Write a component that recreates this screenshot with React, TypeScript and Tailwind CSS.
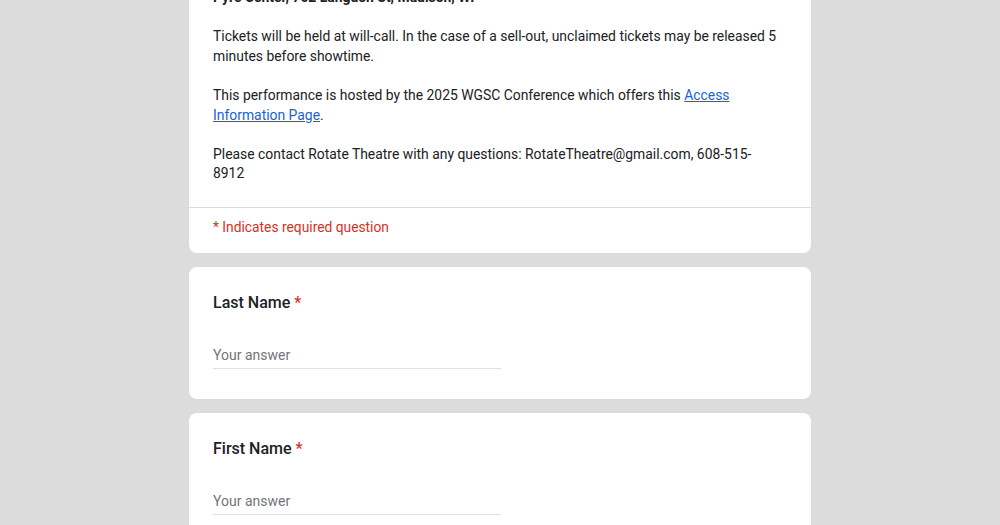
import React from 'react';

const Question = ({ title }: { title: string }) => (
  <div className="rounded-lg bg-white px-6 pt-6 pb-[30px]">
    <div className="text-[16px] leading-6 font-medium text-[#202124]">
      {title} <span className="text-[#d93025]">*</span>
    </div>
    <div className="mt-[30px] w-[288px] border-b border-[#e0e0e0] pb-[3px] text-[14px] leading-5 text-[#70757a]">
      Your answer
    </div>
  </div>
);

export default function App() {
  return (
    <div className="min-h-screen bg-[#dcdcdc] font-['Roboto',sans-serif]">
      <div className="mx-auto -mt-[36px] flex w-[622px] flex-col gap-[14px] pb-10">
        <div className="rounded-lg bg-white">
          <div className="pt-6 pr-[30px] pb-[23px] pl-6 text-[13.9px] leading-[19.6px] text-[#202124]">
            <p className="font-bold">Pyre Center, 702 Langdon St, Madison, WI</p>
            <br />
            <p>
              Tickets will be held at will-call. In the case of a sell-out, unclaimed tickets may be released 5
              minutes before showtime.
            </p>
            <br />
            <p>
              This performance is hosted by the 2025 WGSC Conference which offers this{' '}
              <a href="#" className="text-[#1a62d6] underline">
                Access Information Page
              </a>
              .
            </p>
            <br />
            <p>Please contact Rotate Theatre with any questions: RotateTheatre@gmail.com, 608-515-8912</p>
          </div>
          <div className="border-t border-[#dadce0] px-6 pt-[9px] pb-[16px] text-[13.8px] leading-5 text-[#d93025]">
            * Indicates required question
          </div>
        </div>
        <Question title="Last Name" />
        <Question title="First Name" />
      </div>
    </div>
  );
}
